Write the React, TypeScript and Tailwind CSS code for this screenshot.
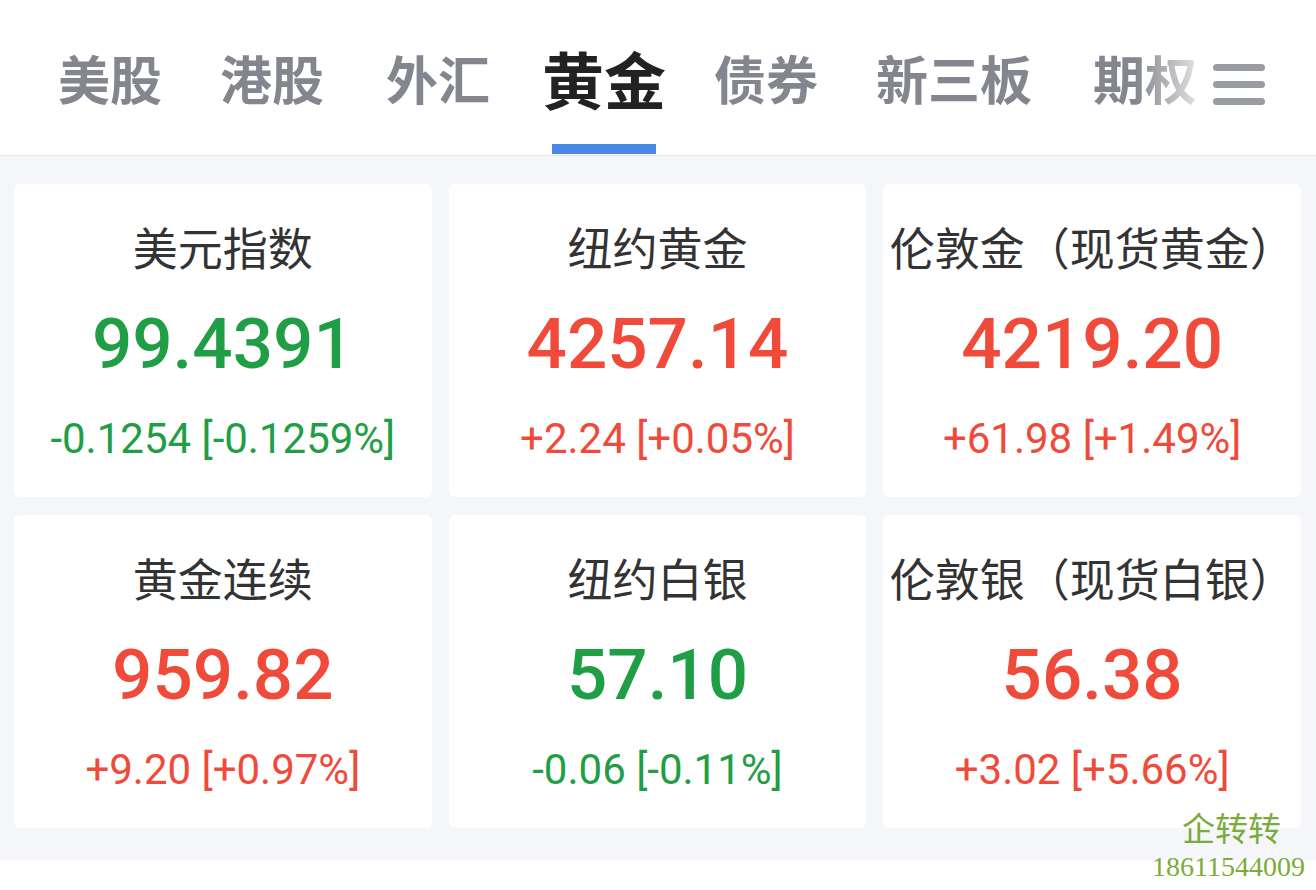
import React from "react";

const cjk = "font-['Noto_Sans_CJK_SC',sans-serif]";
const num = "font-['Roboto','Noto_Sans_CJK_SC',sans-serif]";

const tabs = [
  { label: "美股", ml: "ml-[58px]" },
  { label: "港股", ml: "ml-[58px]" },
  { label: "外汇", ml: "ml-[62px]" },
  { label: "黄金", ml: "ml-[52px]" },
  { label: "债券", ml: "ml-[48px]" },
  { label: "新三板", ml: "ml-[58px]" },
  { label: "期权", ml: "ml-[61px]" },
];

type Quote = { name: string; price: string; change: string; up: boolean };

const quotes: Quote[] = [
  { name: "美元指数", price: "99.4391", change: "-0.1254 [-0.1259%]", up: false },
  { name: "纽约黄金", price: "4257.14", change: "+2.24 [+0.05%]", up: true },
  { name: "伦敦金（现货黄金）", price: "4219.20", change: "+61.98 [+1.49%]", up: true },
  { name: "黄金连续", price: "959.82", change: "+9.20 [+0.97%]", up: true },
  { name: "纽约白银", price: "57.10", change: "-0.06 [-0.11%]", up: false },
  { name: "伦敦银（现货白银）", price: "56.38", change: "+3.02 [+5.66%]", up: true },
];

function QuoteCard({ q }: { q: Quote }) {
  const color = q.up ? "text-[#ef4a3a]" : "text-[#1f9e45]";
  return (
    <div className="h-[313px] rounded-[6px] bg-white flex flex-col items-center pt-[35px] overflow-hidden">
      <div className={`${cjk} text-[45px] leading-[56px] text-[#333333] whitespace-nowrap`}>{q.name}</div>
      <div className={`${num} ${color} mt-[27px] text-[71px] leading-[84px] font-medium`}>{q.price}</div>
      <div className={`${num} ${color} mt-[30px] text-[42px] leading-[46px] whitespace-nowrap`}>{q.change}</div>
    </div>
  );
}

export default function App() {
  return (
    <div className="w-[1316px] h-[890px] bg-white relative overflow-hidden">
      <header className="h-[156px] border-b border-[#e6e7ea] relative flex items-start">
        <nav className="flex items-center h-[156px] whitespace-nowrap">
          {tabs.map((t) => {
            const active = t.label === "黄金";
            return (
              <div key={t.label} className={`relative flex flex-col items-center ${t.ml}`}>
                <span
                  className={`${cjk} font-bold ${
                    active ? "text-[62px] leading-[72px] text-[#222222]" : "text-[52px] leading-[72px] text-[#83868e]"
                  }`}
                >
                  {t.label}
                </span>
                {active && <div className="absolute top-[102px] w-[104px] h-[10px] bg-[#4a88e6]" />}
              </div>
            );
          })}
        </nav>
        <div className="absolute right-0 top-0 h-[150px] w-[180px] flex items-center justify-end pr-[51px] bg-gradient-to-r from-white/0 via-white via-[45%] to-white">
          <div className="flex flex-col gap-[10px] mt-[18px]">
            <div className="w-[52px] h-[7px] rounded-full bg-[#9a9ca4]" />
            <div className="w-[52px] h-[7px] rounded-full bg-[#9a9ca4]" />
            <div className="w-[52px] h-[7px] rounded-full bg-[#9a9ca4]" />
          </div>
        </div>
      </header>

      <main className="bg-[#f5f6fa] pt-[28px] pl-[14px] pr-[15px] pb-[32px] grid grid-cols-3 gap-x-[17px] gap-y-[18px]">
        {quotes.map((q) => (
          <QuoteCard key={q.name} q={q} />
        ))}
      </main>

      <div className="absolute right-[11px] top-[808px] flex flex-col items-center text-[#7aab3c]">
        <div className="font-['Liberation_Serif','Noto_Sans_CJK_SC',serif] text-[33px] leading-[44px] ml-[6px]">企转转</div>
        <div className="font-['Liberation_Serif',serif] text-[28px] leading-[30px]">18611544009</div>
      </div>
    </div>
  );
}
